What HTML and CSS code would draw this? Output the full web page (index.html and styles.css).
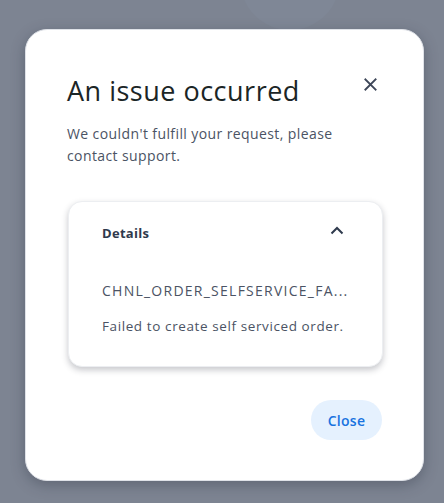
FILE: index.html
```html
<!DOCTYPE html>
<html>
<head>
<meta charset="utf-8">
<link rel="stylesheet" href="styles.css">
</head>
<body>
<div class="backdrop">
  <div class="ghost"></div>
  <div class="modal">
    <div class="head">
      <h1 class="title">An issue occurred</h1>
      <button class="x" aria-label="Close">
        <svg width="14" height="14" viewBox="0 0 14 14"><path d="M1.5 1.5L12.5 12.5M12.5 1.5L1.5 12.5" stroke="#3d4658" stroke-width="2" stroke-linecap="square"/></svg>
      </button>
    </div>
    <p class="desc">We couldn't fulfill your request, please contact support.</p>
    <div class="card">
      <div class="card-head">
        <span class="card-title">Details</span>
        <svg width="14" height="9" viewBox="0 0 14 9"><path d="M1.5 7.5L7 2L12.5 7.5" fill="none" stroke="#2f3a4d" stroke-width="2"/></svg>
      </div>
      <div class="code" title="CHNL_ORDER_SELFSERVICE_FAILED">CHNL_ORDER_SELFSERVICE_FA...</div>
      <div class="msg">Failed to create self serviced order.</div>
    </div>
    <div class="foot">
      <button class="close">Close</button>
    </div>
  </div>
</div>
</body>
</html>
```
FILE: styles.css
```css
* { box-sizing: border-box; }
html, body { margin: 0; padding: 0; }
body {
  font-family: "Open Sans", "Noto Sans", sans-serif;
  background: #7d8492;
  width: 444px;
  height: 503px;
  overflow: hidden;
}
.backdrop {
  position: relative;
  width: 444px;
  height: 503px;
  padding: 29px 20px 0 25px;
}
.ghost {
  position: absolute;
  left: 240px;
  top: -70px;
  width: 100px;
  height: 100px;
  border-radius: 50%;
  background: #7f8796;
}
.modal {
  position: relative;
  width: 399px;
  height: 452px;
  background: #fff;
  border: 1px solid #dfe2e8;
  border-radius: 22px;
  box-shadow: 0 4px 14px rgba(40, 46, 60, 0.35);
  padding: 43px 41px 0 41px;
  display: flex;
  flex-direction: column;
}
.head {
  display: flex;
  justify-content: space-between;
  align-items: flex-start;
}
.title {
  margin: 0;
  font-size: 27px;
  font-weight: 400;
  color: #1b2526;
  line-height: 36px;
  letter-spacing: 0.5px;
}
.x {
  border: 0;
  background: none;
  padding: 0;
  margin: 5px 5px 0 0;
  width: 13px;
  height: 13px;
  display: flex;
}
.x svg { width: 13px; height: 13px; }
.desc {
  margin: 14px 0 0 0;
  font-size: 14px;
  line-height: 22px;
  color: #4b5364;
  width: 300px;
  letter-spacing: 0.4px;
}
.card {
  margin: 34px 0 0 1px;
  width: 315px;
  height: 166px;
  border-radius: 14px;
  background: #fff;
  border: 1px solid #eceef1;
  box-shadow: 0 3px 6px rgba(30, 35, 50, 0.25);
  padding: 21px 38px 0 33px;
}
.card-head {
  display: flex;
  justify-content: space-between;
  align-items: center;
  height: 20px;
}
.card-head svg { margin-top: -6px; }
.card-title {
  font-size: 13px;
  font-weight: 700;
  color: #2f3a4d;
  letter-spacing: 0.3px;
}
.code {
  margin-top: 38px;
  font-size: 14px;
  color: #4b5364;
  white-space: nowrap;
  line-height: 20px;
  letter-spacing: 1.25px;
}
.msg {
  margin-top: 15px;
  font-size: 13.5px;
  color: #4b5364;
  line-height: 20px;
  letter-spacing: 0.6px;
}
.foot {
  display: flex;
  justify-content: flex-end;
  margin-top: 33px;
}
.close {
  border: 0;
  background: #e5f1fe;
  color: #1873e0;
  font-family: inherit;
  font-size: 14px;
  font-weight: 600;
  letter-spacing: 0.3px;
  width: 71px;
  height: 40px;
  border-radius: 20px;
  margin-right: 0;
}
```
